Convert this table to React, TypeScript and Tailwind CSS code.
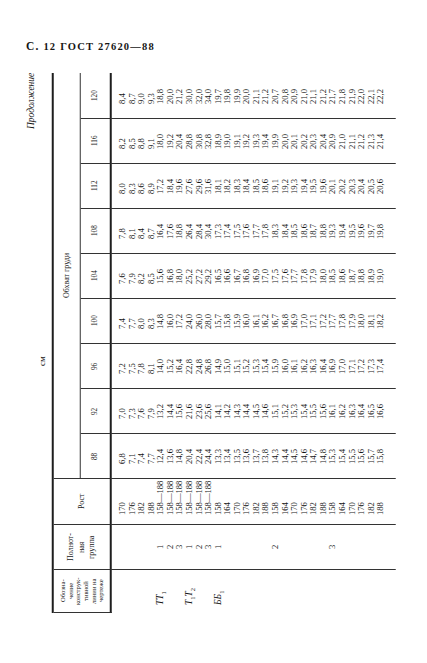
import type { ReactNode } from 'react';

const SIZES = ['88', '92', '96', '100', '104', '108', '112', '116', '120'];

// values per chest girth column, rows in printed order
const COLS: string[] = [
  '6,8 7,1 7,4 7,7 12,4 13,6 14,8 20,4 22,4 24,4 13,3 13,4 13,5 13,6 13,7 13,8 14,3 14,4 14,5 14,6 14,7 14,8 15,3 15,4 15,5 15,6 15,7 15,8',
  '7,0 7,3 7,6 7,9 13,2 14,4 15,6 21,6 23,6 25,6 14,1 14,2 14,3 14,4 14,5 14,6 15,1 15,2 15,3 15,4 15,5 15,6 16,1 16,2 16,3 16,4 16,5 16,6',
  '7,2 7,5 7,8 8,1 14,0 15,2 16,4 22,8 24,8 26,8 14,9 15,0 15,1 15,2 15,3 15,4 15,9 16,0 16,1 16,2 16,3 16,4 16,9 17,0 17,1 17,2 17,3 17,4',
  '7,4 7,7 8,0 8,3 14,8 16,0 17,2 24,0 26,0 28,0 15,7 15,8 15,9 16,0 16,1 16,2 16,7 16,8 16,9 17,0 17,1 17,2 17,7 17,8 17,9 18,0 18,1 18,2',
  '7,6 7,9 8,2 8,5 15,6 16,8 18,0 25,2 27,2 29,2 16,5 16,6 16,7 16,8 16,9 17,0 17,5 17,6 17,7 17,8 17,9 18,0 18,5 18,6 18,7 18,8 18,9 19,0',
  '7,8 8,1 8,4 8,7 16,4 17,6 18,8 26,4 28,4 30,4 17,3 17,4 17,5 17,6 17,7 17,8 18,3 18,4 18,5 18,6 18,7 18,8 19,3 19,4 19,5 19,6 19,7 19,8',
  '8,0 8,3 8,6 8,9 17,2 18,4 19,6 27,6 29,6 31,6 18,1 18,2 18,3 18,4 18,5 18,6 19,1 19,2 19,3 19,4 19,5 19,6 20,1 20,2 20,3 20,4 20,5 20,6',
  '8,2 8,5 8,8 9,1 18,0 19,2 20,4 28,8 30,8 32,8 18,9 19,0 19,1 19,2 19,3 19,4 19,9 20,0 20,1 20,2 20,3 20,4 20,9 21,0 21,1 21,2 21,3 21,4',
  '8,4 8,7 9,0 9,3 18,8 20,0 21,2 30,0 32,0 34,0 19,7 19,8 19,9 20,0 21,1 21,2 20,7 20,8 20,9 21,0 21,1 21,2 21,7 21,8 21,9 22,0 22,1 22,2',
];

const GROUP = ['158', '164', '170', '176', '182', '188'];
const ROST = [
  '170', '176', '182', '188',
  ...Array(6).fill('158—188'),
  ...GROUP, ...GROUP, ...GROUP,
];

const POLN: Record<number, string> = { 4: '1', 5: '2', 6: '3', 7: '1', 8: '2', 9: '3', 10: '1', 16: '2', 22: '3' };

function Sub({ children }: { children: ReactNode }) {
  return <span className="[vertical-align:sub] text-[6.5px] not-italic">{children}</span>;
}

const OBOZ: Record<number, ReactNode> = {
  4: <>ТТ<Sub>1</Sub></>,
  7: <>Т<Sub>1</Sub>Т<Sub>2</Sub></>,
  10: <>ББ<Sub>1</Sub></>,
};

const ROWS = Array.from({ length: 28 }, (_, i) => i);

function Line({ children }: { children?: ReactNode }) {
  return <div className="[block-size:9.57px] leading-[9.57px] whitespace-nowrap">{children ?? '\u00a0'}</div>;
}

// all borders are logical: block = original top/bottom, inline = original left/right
const dataCell = '[padding-block-start:6px] [padding-block-end:10px] text-[8.6px]';

export default function App() {
  return (
    <div className="min-h-screen bg-white text-[#161616] pl-[26px] pt-[40px] font-['Liberation_Serif',serif]">
      <div className="text-[10.5px] leading-[12px] font-bold tracking-[1.2px]">
        <span className="text-[11.5px]">С.</span> 12 ГОСТ 27620—88
      </div>

      <div className="mt-[20px] h-[540px] w-fit [writing-mode:vertical-rl] [text-orientation:sideways] rotate-180">
        <div className="text-end italic text-[9.5px] leading-[11px]">Продолжение</div>
        <div className="[padding-inline-start:247px] text-[9px] leading-[10px]">см</div>

        <div className="[margin-block-start:5px] grid grid-cols-[44px_45px_46px_repeat(9,45px)] grid-rows-[27px_31px_auto] [border-block-start:2px_solid_#1e1e1e]">
          <div className="row-span-2 flex items-center justify-center text-center text-[6.6px] leading-[7.6px] [border-inline-start:1px_solid_#333] [border-inline-end:1px_solid_#333] [border-block-end:2px_solid_#1e1e1e]">
            <div>
              Обозна-<br />чение<br />конструк-<br />тивной<br />линии на<br />чертеже
            </div>
          </div>
          <div className="row-span-2 flex items-center justify-center text-center text-[8px] leading-[10.5px] [border-inline-end:1px_solid_#333] [border-block-end:2px_solid_#1e1e1e]">
            <div>
              Полнот-<br />ная<br />группа
            </div>
          </div>
          <div className="row-span-2 flex items-center justify-center text-[8px] [border-inline-end:1px_solid_#333] [border-block-end:2px_solid_#1e1e1e]">
            Рост
          </div>
          <div className="col-span-9 flex items-center justify-center text-[8px] [border-block-end:1px_solid_#333]">
            Обхват груди
          </div>
          {SIZES.map((s, i) => (
            <div
              key={s}
              className={
                i < SIZES.length - 1
                  ? 'flex items-center justify-center text-[7.2px] [border-inline-end:1px_solid_#333] [border-block-end:2px_solid_#1e1e1e]'
                  : 'flex items-center justify-center text-[7.2px] [border-block-end:2px_solid_#1e1e1e]'
              }
            >
              {s}
            </div>
          ))}

          {/* data */}
          <div className={`${dataCell} italic text-[9.5px] [padding-inline-start:8px] [border-inline-end:1px_solid_#333]`}>
            {ROWS.map((r) => (
              <Line key={r}>{OBOZ[r]}</Line>
            ))}
          </div>
          <div className={`${dataCell} text-center [border-inline-end:1px_solid_#333]`}>
            {ROWS.map((r) => (
              <Line key={r}>{POLN[r]}</Line>
            ))}
          </div>
          <div className={`${dataCell} [padding-inline-start:9px] [border-inline-end:1px_solid_#333]`}>
            {ROST.map((v, r) => (
              <Line key={r}>{v}</Line>
            ))}
          </div>
          {COLS.map((col, i) => (
            <div
              key={i}
              className={
                i < COLS.length - 1
                  ? `${dataCell} [padding-inline-start:14px] [border-inline-end:1px_solid_#333]`
                  : `${dataCell} [padding-inline-start:14px]`
              }
            >
              {col.split(' ').map((v, r) => (
                <Line key={r}>{v}</Line>
              ))}
            </div>
          ))}
        </div>
      </div>
    </div>
  );
}
